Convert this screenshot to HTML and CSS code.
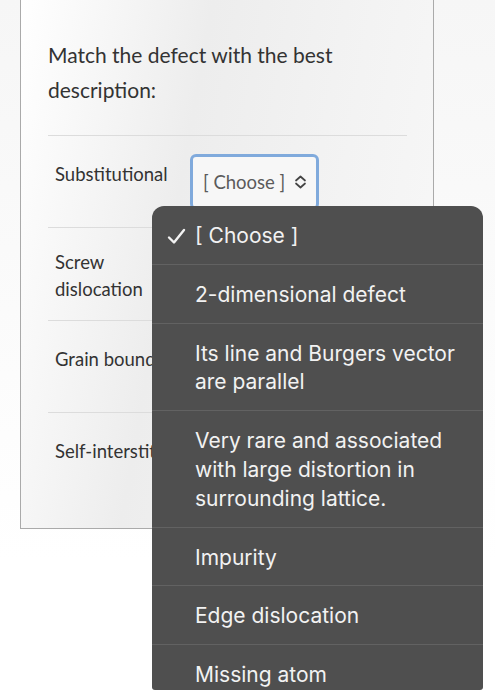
FILE: index.html
```html
<!DOCTYPE html>
<html lang="en">

<head>
    <meta charset="UTF-8">
    <meta name="viewport" content="width=device-width, initial-scale=1.0">
    <title>Matching Question</title>
    <link rel="stylesheet" href="styles.css">
</head>

<body>
    <div class="page">
        <div class="question">
            <p class="question-text">Match the defect with the best description:</p>

            <div class="answers">
                <div class="answer-row">
                    <label class="answer-label" for="sel1">Substitutional</label>
                    <div class="choose-box focused" id="sel1">
                        <span>[ Choose ]</span>
                        <svg class="chevron" width="13" height="14" viewBox="0 0 13 14">
                            <polyline points="2,5.5 6.5,1.5 11,5.5" />
                            <polyline points="2,8.5 6.5,12.5 11,8.5" />
                        </svg>
                    </div>
                </div>

                <!-- these selects sit under the open picker -->
                <div class="answer-row">
                    <label class="answer-label two-line" for="sel2">Screw dislocation</label>
                    <div class="choose-box" id="sel2"></div>
                </div>

                <div class="answer-row">
                    <label class="answer-label" for="sel3">Grain boundary</label>
                    <div class="choose-box" id="sel3"></div>
                </div>

                <div class="answer-row last">
                    <label class="answer-label" for="sel4">Self-interstitial</label>
                    <div class="choose-box" id="sel4"></div>
                </div>
            </div>
        </div>

        <ul class="picker">
            <li class="picker-item selected">
                <svg class="check" width="19" height="17" viewBox="0 0 19 17">
                    <polyline points="2,9.5 7,14.5 17,2" />
                </svg>
                [ Choose ]
            </li>
            <li class="picker-item">2-dimensional defect</li>
            <li class="picker-item">Its line and Burgers vector are parallel</li>
            <li class="picker-item">Very rare and associated with large distortion in surrounding lattice.</li>
            <li class="picker-item">Impurity</li>
            <li class="picker-item">Edge dislocation</li>
            <li class="picker-item">Missing atom</li>
        </ul>
    </div>
</body>

</html>
```

FILE: styles.css
```css
body {
    margin: 0;
    font-family: Lato, "Open Sans", sans-serif;
    background: linear-gradient(180deg, #f6f6f6 0%, #ffffff 80%);
    color: #333;
}

.page {
    position: relative;
    width: 495px;
    height: 700px;
    overflow: hidden;
    padding-left: 20px;
    box-sizing: border-box;
}

.question {
    width: 414px;
    box-sizing: border-box;
    border: 1px solid #aaa;
    border-top: none;
    padding: 37px 27px 24px 27px;
    background: linear-gradient(100deg, #ffffff 0%, #ededed 38%, #f3f3f3 70%, #f8f8f8 100%);
}

.question-text {
    margin: 0;
    width: 330px;
    font-size: 21px;
    line-height: 35px;
    color: #333;
}

.answers {
    margin-top: 28px;
    width: 359px;
    border-top: 1px solid #dcdcdc;
}

.answer-row {
    display: flex;
    align-items: flex-start;
    gap: 8px;
    padding: 18px 0 17px 7px;
    border-bottom: 1px solid #dcdcdc;
}

.answer-row.last {
    border-bottom: none;
}

.answer-label {
    width: 127px;
    padding-top: 7px;
    font-size: 18.5px;
    line-height: 27px;
    color: #333;
}

.answer-label.two-line {
    padding-top: 3px;
}

.choose-box {
    display: flex;
    align-items: center;
    gap: 9px;
    width: 129px;
    height: 56px;
    box-sizing: border-box;
    padding: 0 0 0 10px;
    border: 3px solid #c9c9c9;
    border-radius: 6px;
    background: #f7f7f7;
    font-size: 18.5px;
    color: #5b5b5b;
}

.choose-box.focused {
    border-color: #80aadc;
}

.chevron polyline {
    fill: none;
    stroke: #444;
    stroke-width: 1.7;
    stroke-linecap: round;
    stroke-linejoin: round;
}

.picker {
    position: absolute;
    left: 152px;
    top: 206px;
    width: 331px;
    height: 484px;
    margin: 0;
    padding: 0;
    list-style: none;
    overflow: hidden;
    background: #4f4f4f;
    border-radius: 12px 12px 3px 3px;
    font-family: Inter, Roboto, sans-serif;
    font-size: 21px;
    color: #f2f2f2;
}

.picker-item {
    position: relative;
    padding: 16px 16px 13px 43px;
    line-height: 28.8px;
    border-bottom: 1px solid #626262;
}

.check {
    position: absolute;
    left: 15px;
    top: 22px;
}

.check polyline {
    fill: none;
    stroke: #f2f2f2;
    stroke-width: 2.4;
    stroke-linecap: round;
    stroke-linejoin: round;
}
```
